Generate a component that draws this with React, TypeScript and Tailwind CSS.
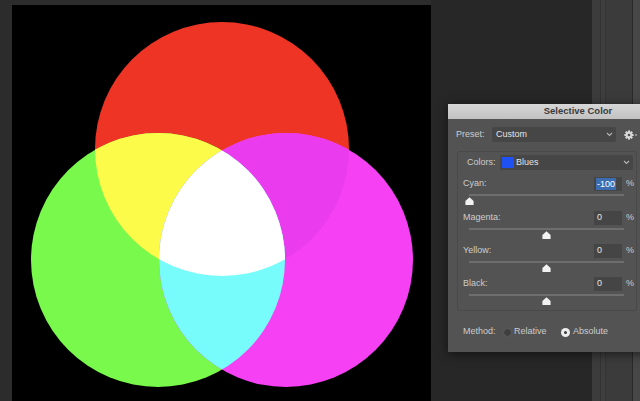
import React from "react";

const TRACK_W = 155;

function Thumb({ value }: { value: number }) {
  const center = ((value + 100) / 200) * TRACK_W;
  return (
    <div className="relative h-[8px] w-[155px]">
      <svg
        width="9"
        height="8"
        viewBox="0 0 9 8"
        className="absolute top-0"
        style={{ left: center - 4.5 }}
      >
        <path d="M4.5 0.3 L8.6 4 L8.6 7.4 Q8.6 8 8 8 L1 8 Q0.4 8 0.4 7.4 L0.4 4 Z" fill="#f2f2f2" />
      </svg>
    </div>
  );
}

function SliderRow({
  label,
  value,
  selected,
  mt,
}: {
  label: string;
  value: number;
  selected?: boolean;
  mt: string;
}) {
  return (
    <div className={"flex flex-col " + mt}>
      <div className="flex items-center h-[14px]">
        <span className="w-[136px] pl-[5px] text-[#cdcdcd]">{label}</span>
        <div className="w-[28px] h-[14px] bg-[#454545] flex items-center pl-[2px]">
          {selected ? (
            <span className="bg-[#3b6db0] text-white leading-[12px] h-[12px] px-[1px]">-100</span>
          ) : (
            <span className="text-[#e6e6e6] pl-[1px]">{value}</span>
          )}
        </div>
        <span className="ml-[4px] text-[#cdcdcd]">%</span>
      </div>
      <div className="ml-[11px] mt-[3px] w-[155px] h-[2px] bg-[#6e6e6e]" />
      <div className="ml-[11px] mt-[1px]">
        <Thumb value={value} />
      </div>
    </div>
  );
}

function Chevron() {
  return (
    <svg width="7" height="5" viewBox="0 0 7 5" className="shrink-0">
      <path d="M1 1 L3.5 3.5 L6 1" stroke="#b5b5b5" strokeWidth="1.1" fill="none" />
    </svg>
  );
}

function Gear() {
  return (
    <svg width="14" height="10" viewBox="0 0 14 10">
      <g transform="translate(5,5)" fill="#d8d8d8">
        {[0, 45, 90, 135].map((a) => (
          <rect key={a} x="-1" y="-4.6" width="2" height="9.2" transform={`rotate(${a})`} />
        ))}
        <circle r="3.4" />
      </g>
      <circle cx="5" cy="5" r="1.3" fill="#535353" />
      <path d="M11 5 L13 5" stroke="#cfcfcf" strokeWidth="1" />
    </svg>
  );
}

function Radio({ checked }: { checked?: boolean }) {
  return checked ? (
    <div className="w-[9px] h-[9px] rounded-full bg-[#ededed] flex items-center justify-center">
      <div className="w-[3px] h-[3px] rounded-full bg-[#3a3a3a]" />
    </div>
  ) : (
    <div className="w-[9px] h-[9px] rounded-full bg-[#3f3f3f] border border-[#5d5d5d]" />
  );
}

function Dialog() {
  return (
    <div className="absolute left-[448px] top-[104px] w-[260px] h-[248px] bg-[#535353] shadow-[0_2px_10px_rgba(0,0,0,0.55)] flex flex-col font-['Liberation_Sans',Arial,sans-serif] text-[9px]">
      <div className="h-[15px] bg-gradient-to-b from-[#d6d6d6] to-[#c2c2c2] flex items-center justify-center font-bold text-[#3b3b3b] text-[9.5px]">
        Selective Color
      </div>
      <div className="flex items-center pl-[8px] mt-[8px] h-[15px]">
        <span className="w-[36px] text-[#cdcdcd]">Preset:</span>
        <div className="w-[124px] h-[15px] bg-[#464646] rounded-[2px] flex items-center justify-between pl-[4px] pr-[3px]">
          <span className="text-[#e4e4e4]">Custom</span>
          <Chevron />
        </div>
        <div className="ml-[8px]">
          <Gear />
        </div>
      </div>
      <div className="ml-[9px] mt-[9px] w-[180px] border border-[#4a4a4a] rounded-[2px] flex flex-col pb-[5px]">
        <div className="flex items-center h-[15px] mt-[3px]">
          <span className="w-[42px] pl-[9px] text-[#cdcdcd]">Colors:</span>
          <div className="w-[133px] h-[15px] bg-[#464646] rounded-[2px] flex items-center pl-[2px] pr-[3px]">
            <div className="w-[12px] h-[11px] bg-[#1e50f2]" />
            <span className="ml-[2px] text-[#e4e4e4] flex-1">Blues</span>
            <Chevron />
          </div>
        </div>
        <SliderRow label="Cyan:" value={-100} selected mt="mt-[7px]" />
        <SliderRow label="Magenta:" value={0} mt="mt-[6px]" />
        <SliderRow label="Yellow:" value={0} mt="mt-[5px]" />
        <SliderRow label="Black:" value={0} mt="mt-[5px]" />
      </div>
      <div className="flex items-center h-[14px] mt-[14px] pl-[15px] text-[#cdcdcd]">
        <span className="w-[40px]">Method:</span>
        <Radio />
        <span className="ml-[2px] w-[47px]">Relative</span>
        <Radio checked />
        <span className="ml-[3px]">Absolute</span>
      </div>
    </div>
  );
}

function Circles() {
  const r = 127;
  const R = { cx: 210, cy: 144 };
  const G = { cx: 146, cy: 255 };
  const M = { cx: 274, cy: 255 };
  return (
    <svg width="419" height="396" viewBox="0 0 419 396">
      <defs>
        <clipPath id="cr">
          <circle cx={R.cx} cy={R.cy} r={r} />
        </clipPath>
        <clipPath id="cg">
          <circle cx={G.cx} cy={G.cy} r={r} />
        </clipPath>
      </defs>
      <circle cx={R.cx} cy={R.cy} r={r} fill="#ed3425" />
      <circle cx={G.cx} cy={G.cy} r={r} fill="#78f94c" />
      <circle cx={M.cx} cy={M.cy} r={r} fill="#f640f3" />
      <g clipPath="url(#cr)">
        <circle cx={G.cx} cy={G.cy} r={r} fill="#fdfb4a" />
        <circle cx={M.cx} cy={M.cy} r={r} fill="#ea3bef" />
      </g>
      <g clipPath="url(#cg)">
        <circle cx={M.cx} cy={M.cy} r={r} fill="#77fbfb" />
        <g clipPath="url(#cr)">
          <circle cx={M.cx} cy={M.cy} r={r} fill="#ffffff" />
        </g>
      </g>
    </svg>
  );
}

export default function App() {
  return (
    <div className="relative w-[640px] h-[401px] overflow-hidden flex bg-[#2c2c2c]">
      <div className="pl-[12px] pt-[5px] shrink-0">
        <div className="w-[419px] h-[396px] bg-black">
          <Circles />
        </div>
      </div>
      <div className="w-[161px] h-full bg-[#272727] shrink-0" />
      <div className="flex-1 h-full flex">
        <div className="w-[8px] bg-[#3c3c3c]" />
        <div className="w-[1px] bg-[#333333]" />
        <div className="w-[4px] bg-[#3e3e3e]" />
        <div className="w-[1px] bg-[#353535]" />
        <div className="w-[26px] bg-[#3b3b3b]" />
        <div className="w-[1px] bg-[#2a2a2a]" />
        <div className="flex-1 bg-[#474747]" />
      </div>
      <Dialog />
    </div>
  );
}
